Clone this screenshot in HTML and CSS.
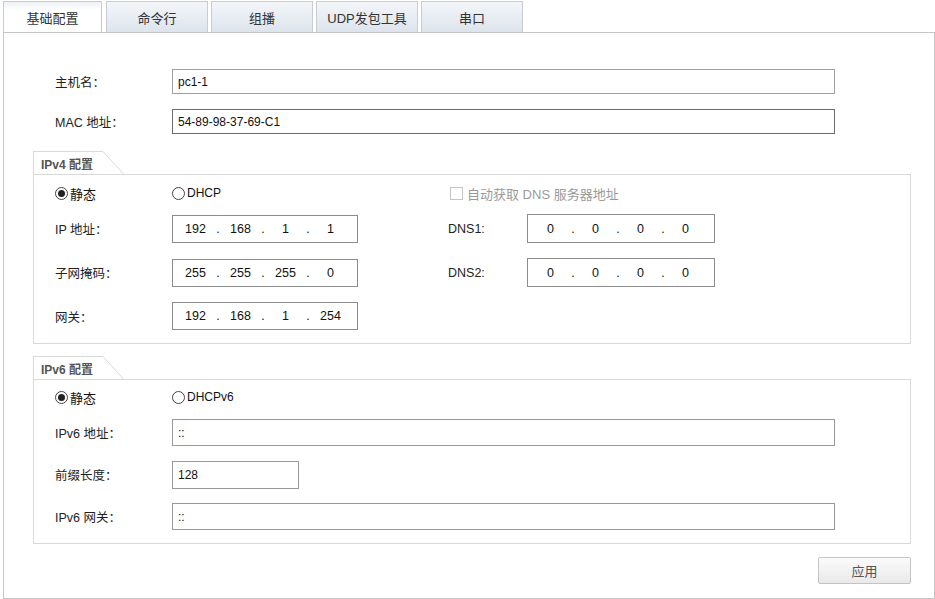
FILE: index.html
```html
<!DOCTYPE html>
<html lang="zh-CN">
<head>
<meta charset="utf-8">
<title>基础配置</title>
<link rel="stylesheet" href="styles.css">
</head>
<body>
<div class="tabs">
  <div class="tab tab-active">基础配置</div>
  <div class="tab">命令行</div>
  <div class="tab">组播</div>
  <div class="tab">UDP发包工具</div>
  <div class="tab">串口</div>
</div>
<div class="panel">
  <div class="field-row first">
    <span class="lbl">主机名：</span>
    <div class="input input-wide">pc1-1</div>
  </div>
  <div class="field-row second">
    <span class="lbl">MAC 地址：</span>
    <div class="input input-wide input-dark">54-89-98-37-69-C1</div>
  </div>

  <div class="group group-v4">
    <div class="legend"><span class="legend-text">IPv4 配置</span><svg class="legend-slant" width="24" height="23" viewBox="0 0 24 23"><path d="M0 0.5 H3 L23.5 23" stroke="#d9d9d9" fill="none"/></svg></div>
    <div class="box box-v4">
      <div class="grow radio-row">
        <label class="radio"><span class="dot checked"></span>静态</label>
        <label class="radio"><span class="dot"></span><span class="lat">DHCP</span></label>
        <span></span>
        <label class="check"><span class="cbox"></span><span class="check-text">自动获取 DNS 服务器地址</span></label>
      </div>
      <div class="grow ip-row">
        <span class="lbl">IP 地址：</span>
        <div class="input ip"><span class="oct">192</span><span class="sep">.</span><span class="oct">168</span><span class="sep">.</span><span class="oct">1</span><span class="sep">.</span><span class="oct">1</span></div>
        <span></span>
        <span class="lbl">DNS1:</span>
        <div class="input ip ip-dns"><span class="oct">0</span><span class="sep">.</span><span class="oct">0</span><span class="sep">.</span><span class="oct">0</span><span class="sep">.</span><span class="oct">0</span></div>
      </div>
      <div class="grow ip-row gap16">
        <span class="lbl">子网掩码：</span>
        <div class="input ip"><span class="oct">255</span><span class="sep">.</span><span class="oct">255</span><span class="sep">.</span><span class="oct">255</span><span class="sep">.</span><span class="oct">0</span></div>
        <span></span>
        <span class="lbl">DNS2:</span>
        <div class="input ip ip-dns"><span class="oct">0</span><span class="sep">.</span><span class="oct">0</span><span class="sep">.</span><span class="oct">0</span><span class="sep">.</span><span class="oct">0</span></div>
      </div>
      <div class="grow ip-row gap16">
        <span class="lbl">网关：</span>
        <div class="input ip"><span class="oct">192</span><span class="sep">.</span><span class="oct">168</span><span class="sep">.</span><span class="oct">1</span><span class="sep">.</span><span class="oct">254</span></div>
      </div>
    </div>
  </div>

  <div class="group group-v6">
    <div class="legend"><span class="legend-text">IPv6 配置</span><svg class="legend-slant" width="24" height="23" viewBox="0 0 24 23"><path d="M0 0.5 H3 L23.5 23" stroke="#d9d9d9" fill="none"/></svg></div>
    <div class="box box-v6">
      <div class="grow radio-row">
        <label class="radio"><span class="dot checked"></span>静态</label>
        <label class="radio"><span class="dot"></span><span class="lat">DHCPv6</span></label>
      </div>
      <div class="field6 v6-first">
        <span class="lbl">IPv6 地址：</span>
        <div class="input input-v6">::</div>
      </div>
      <div class="field6">
        <span class="lbl">前缀长度：</span>
        <div class="input input-prefix">128</div>
      </div>
      <div class="field6">
        <span class="lbl">IPv6 网关：</span>
        <div class="input input-v6">::</div>
      </div>
    </div>
  </div>

  <div class="actions">
    <button class="btn" type="button">应用</button>
  </div>
</div>
</body>
</html>
```

FILE: styles.css
```css
* { box-sizing: border-box; }

html, body {
  margin: 0;
  padding: 0;
  background: #ffffff;
}

body {
  font-family: "Liberation Sans", "Noto Sans CJK SC", sans-serif;
  font-size: 12px;
  color: #222;
  width: 935px;
  height: 599px;
  overflow: hidden;
}

.tabs {
  display: flex;
  padding: 1px 0 0 3px;
  height: 32px;
}

.tab {
  width: 102px;
  height: 31px;
  margin-right: 3px;
  border: 1px solid #c9cdd2;
  border-bottom: none;
  background: linear-gradient(#f3f6f9, #dde4ed);
  display: flex;
  align-items: center;
  justify-content: center;
  font-size: 13px;
  color: #333;
}

.tab-active {
  width: 99px;
  margin-right: 4px;
  background: linear-gradient(#eef1f5 0, #ffffff 8px, #ffffff);
}

.panel {
  margin-left: 3px;
  width: 932px;
  height: 567px;
  border: 1px solid #c6c6c6;
  padding: 36px 23px 0 29px;
}

.field-row {
  display: flex;
  align-items: center;
  padding-left: 22px;
  height: 25px;
}

.field-row.second {
  margin-top: 15px;
}

.lbl {
  width: 117px;
  font-size: 12.5px;
  color: #222;
  white-space: nowrap;
}

.input {
  height: 25px;
  border: 1px solid #a0a0a0;
  background: #fff;
  display: flex;
  align-items: center;
  padding-left: 5px;
  font-size: 12px;
  color: #111;
}

.input-wide { width: 663px; }

.input-dark { border-color: #6c6c6c; }

.group-v4 { margin-top: 17px; }
.group-v6 { margin-top: 12px; }

.legend {
  display: flex;
  height: 23px;
}

.legend-text {
  display: flex;
  align-items: flex-end;
  padding: 0 0 2px 7px;
  width: 67px;
  border-top: 1px solid #d9d9d9;
  border-left: 1px solid #d9d9d9;
  font-weight: bold;
  font-size: 12px;
  color: #555;
  white-space: nowrap;
}

.legend-slant { display: block; }

.box {
  width: 878px;
  border: 1px solid #d9d9d9;
  padding-left: 21px;
}

.box-v4 { padding-top: 8px; padding-bottom: 13px; }
.box-v6 { padding-top: 7px; padding-bottom: 13px; }

.grow {
  display: grid;
  grid-template-columns: 117px 185px 91px 79px 188px;
  align-items: center;
}

.radio-row { height: 20px; }

.ip-row { height: 28px; margin-top: 11px; }
.ip-row.gap16 { margin-top: 16px; }

.radio {
  display: flex;
  align-items: center;
  font-size: 13px;
  color: #111;
}

.dot {
  width: 13px;
  height: 13px;
  border: 1px solid #444;
  border-radius: 50%;
  margin-right: 2px;
  display: flex;
  align-items: center;
  justify-content: center;
}

.dot.checked::after {
  content: "";
  width: 7px;
  height: 7px;
  border-radius: 50%;
  background: #222;
}

.lat { font-size: 12px; }

.check {
  grid-column: 4 / 6;
  display: flex;
  align-items: center;
  margin-left: 2px;
  white-space: nowrap;
}

.check-text {
  font-size: 13px;
  color: #9a9a9a;
}

.cbox {
  width: 13px;
  height: 13px;
  border: 1px solid #c4c4c4;
  margin-right: 4px;
}

.ip {
  height: 28px;
  width: 186px;
  padding-left: 5px;
  border-color: #8c8c8c;
}

.ip-dns {
  height: 29px;
  width: 188px;
}

.oct {
  width: 35px;
  text-align: center;
  font-size: 12.5px;
}

.sep {
  width: 10px;
  text-align: center;
  font-size: 12.5px;
}

.field6 {
  display: flex;
  align-items: center;
  height: 27px;
  margin-top: 15px;
}

.field6.v6-first { margin-top: 12px; }

.input-v6 { width: 663px; height: 27px; border-color: #999; }
.input-prefix { width: 127px; height: 28px; border-color: #999; }

.actions {
  display: flex;
  justify-content: flex-end;
  margin-top: 13px;
}

.btn {
  width: 93px;
  height: 27px;
  border: 1px solid #c4c4c4;
  border-radius: 2px;
  background: linear-gradient(#fbfbfb, #e9e9e9);
  font-family: "Liberation Sans", "Noto Sans CJK SC", sans-serif;
  font-size: 13px;
  color: #555;
  padding: 0;
}
```
